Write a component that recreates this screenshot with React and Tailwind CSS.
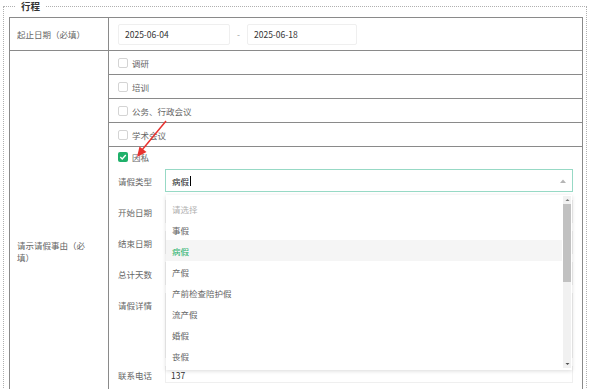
import React from "react";

const Box = ({ checked }) =>
  checked ? (
    <span className="flex h-[10px] w-[10px] items-center justify-center rounded-[2px] bg-[#1fb06a]">
      <svg width="8" height="8" viewBox="0 0 8 8">
        <path d="M1.3 4.1 L3.2 5.9 L6.8 2.1" fill="none" stroke="#fff" strokeWidth="1.4" />
      </svg>
    </span>
  ) : (
    <span className="h-[10px] w-[10px] rounded-[2px] border border-[#d4d4d4] bg-white" />
  );

const CheckRow = ({ label }) => (
  <div className="flex h-[24px] items-center gap-[4px] border-b border-[#8a8a8a] pl-[9px]">
    <Box />
    <span className="text-[#666]">{label}</span>
  </div>
);

const options = ["请选择", "事假", "病假", "产假", "产前检查陪护假", "流产假", "婚假", "丧假"];

export default function App() {
  return (
    <div className="relative h-[389px] w-[590px] overflow-hidden bg-white font-['Noto_Sans_CJK_SC','Noto_Sans',sans-serif] text-[8.5px] leading-[12px]">
      <fieldset className="m-0 mx-[3px] min-w-0 border border-dotted border-[#b0b0b0] p-0 pl-[5px] pr-[3px]">
        <legend className="ml-[6px] px-[6px] text-[9.5px] font-bold leading-[13px] text-[#333]">行程</legend>
        <div className="mt-[4px] border border-b-0 border-[#8a8a8a]">
          <div className="grid h-[33px] grid-cols-[99px_1fr] border-b border-[#8a8a8a]">
            <div className="flex items-center border-r border-[#8a8a8a] pl-[7px] text-[#666]">起止日期（必填）</div>
            <div className="flex items-center pl-[9px]">
              <div className="flex h-[21px] w-[112px] items-center rounded-[2px] border border-[#efefef] pl-[6px] text-[#333]">2025-06-04</div>
              <div className="flex w-[17px] justify-center text-[#999]">-</div>
              <div className="flex h-[21px] w-[110px] items-center rounded-[2px] border border-[#efefef] pl-[6px] text-[#333]">2025-06-18</div>
            </div>
          </div>
          <div className="grid grid-cols-[99px_1fr]">
            <div className="flex items-center border-r border-[#8a8a8a] pl-[7px] pr-[16px] text-[#666]">请示请假事由（必填）</div>
            <div>
              <CheckRow label="调研" />
              <CheckRow label="培训" />
              <CheckRow label="公务、行政会议" />
              <CheckRow label="学术会议" />
              <div className="pb-[68px] pl-[9px] pr-[9px]">
                <div className="flex h-[20px] items-center gap-[4px]">
                  <Box checked />
                  <span className="text-[#666]">因私</span>
                </div>
                <div className="mt-[2px] flex h-[23px] items-center">
                  <span className="w-[47px] shrink-0 text-[#666]">请假类型</span>
                  <div className="relative h-[23px] flex-1">
                    <div className="flex h-full items-center justify-between border border-[#97d9c5] pl-[6px] pr-[6px]">
                      <span className="flex items-center text-[#222]">
                        病假<span className="ml-[1px] inline-block h-[10px] w-px bg-black" />
                      </span>
                      <svg width="6" height="4" viewBox="0 0 6 4">
                        <path d="M0 4 L3 0.5 L6 4 Z" fill="#b5b5b5" />
                      </svg>
                    </div>
                    <div className="absolute left-[1px] right-[1px] top-[26px] z-10 h-[175px] bg-white pt-[3px] shadow-[0_1px_4px_rgba(0,0,0,0.15)]">
                      {options.map((o, i) => (
                        <div
                          key={o}
                          className={
                            "flex h-[21px] items-center pl-[6px] " +
                            (i === 0
                              ? "text-[#b0b0b0]"
                              : i === 2
                              ? "mr-[10px] bg-[#f5f5f5] text-[#1fb06a]"
                              : "text-[#666]")
                          }
                        >
                          {o}
                        </div>
                      ))}
                      <div className="absolute bottom-[2px] right-[1px] top-[1px] flex w-[8px] flex-col items-center bg-[#f1f1f1]">
                        <svg width="5" height="8" viewBox="0 0 5 8" className="shrink-0">
                          <path d="M0.5 5 L2.5 3 L4.5 5 Z" fill="#7a7a7a" />
                        </svg>
                        <div className="h-[78px] w-[8px] bg-[#c1c1c1]" />
                        <div className="flex-1" />
                        <svg width="5" height="8" viewBox="0 0 5 8" className="shrink-0">
                          <path d="M0.5 3 L2.5 5 L4.5 3 Z" fill="#505050" />
                        </svg>
                      </div>
                    </div>
                  </div>
                </div>
                <div className="mt-[8px] flex h-[23px] items-center">
                  <span className="w-[47px] shrink-0 text-[#666]">开始日期</span>
                  <div className="h-full flex-1 border border-[#efefef]" />
                </div>
                <div className="mt-[8px] flex h-[23px] items-center">
                  <span className="w-[47px] shrink-0 text-[#666]">结束日期</span>
                  <div className="h-full flex-1 border border-[#efefef]" />
                </div>
                <div className="mt-[8px] flex h-[23px] items-center">
                  <span className="w-[47px] shrink-0 text-[#666]">总计天数</span>
                  <div className="h-full flex-1 border border-[#efefef]" />
                </div>
                <div className="mt-[8px] flex h-[65px] items-start">
                  <span className="w-[47px] shrink-0 pt-[6px] text-[#666]">请假详情</span>
                  <div className="h-full flex-1 border border-[#efefef]" />
                </div>
                <div className="mt-[8px] flex h-[17px] items-center">
                  <span className="w-[47px] shrink-0 text-[#666]">联系电话</span>
                  <div className="flex h-full flex-1 items-center border border-[#efefef] pl-[5px] text-[#333]">137</div>
                </div>
              </div>
            </div>
          </div>
        </div>
      </fieldset>
      <svg className="pointer-events-none absolute left-0 top-0 z-20" width="590" height="389">
        <line x1="166" y1="121" x2="142" y2="150" stroke="#e8322f" strokeWidth="1.5" />
        <path d="M137 157 L139.5 146.5 L146.5 152 Z" fill="#e8322f" />
      </svg>
    </div>
  );
}
